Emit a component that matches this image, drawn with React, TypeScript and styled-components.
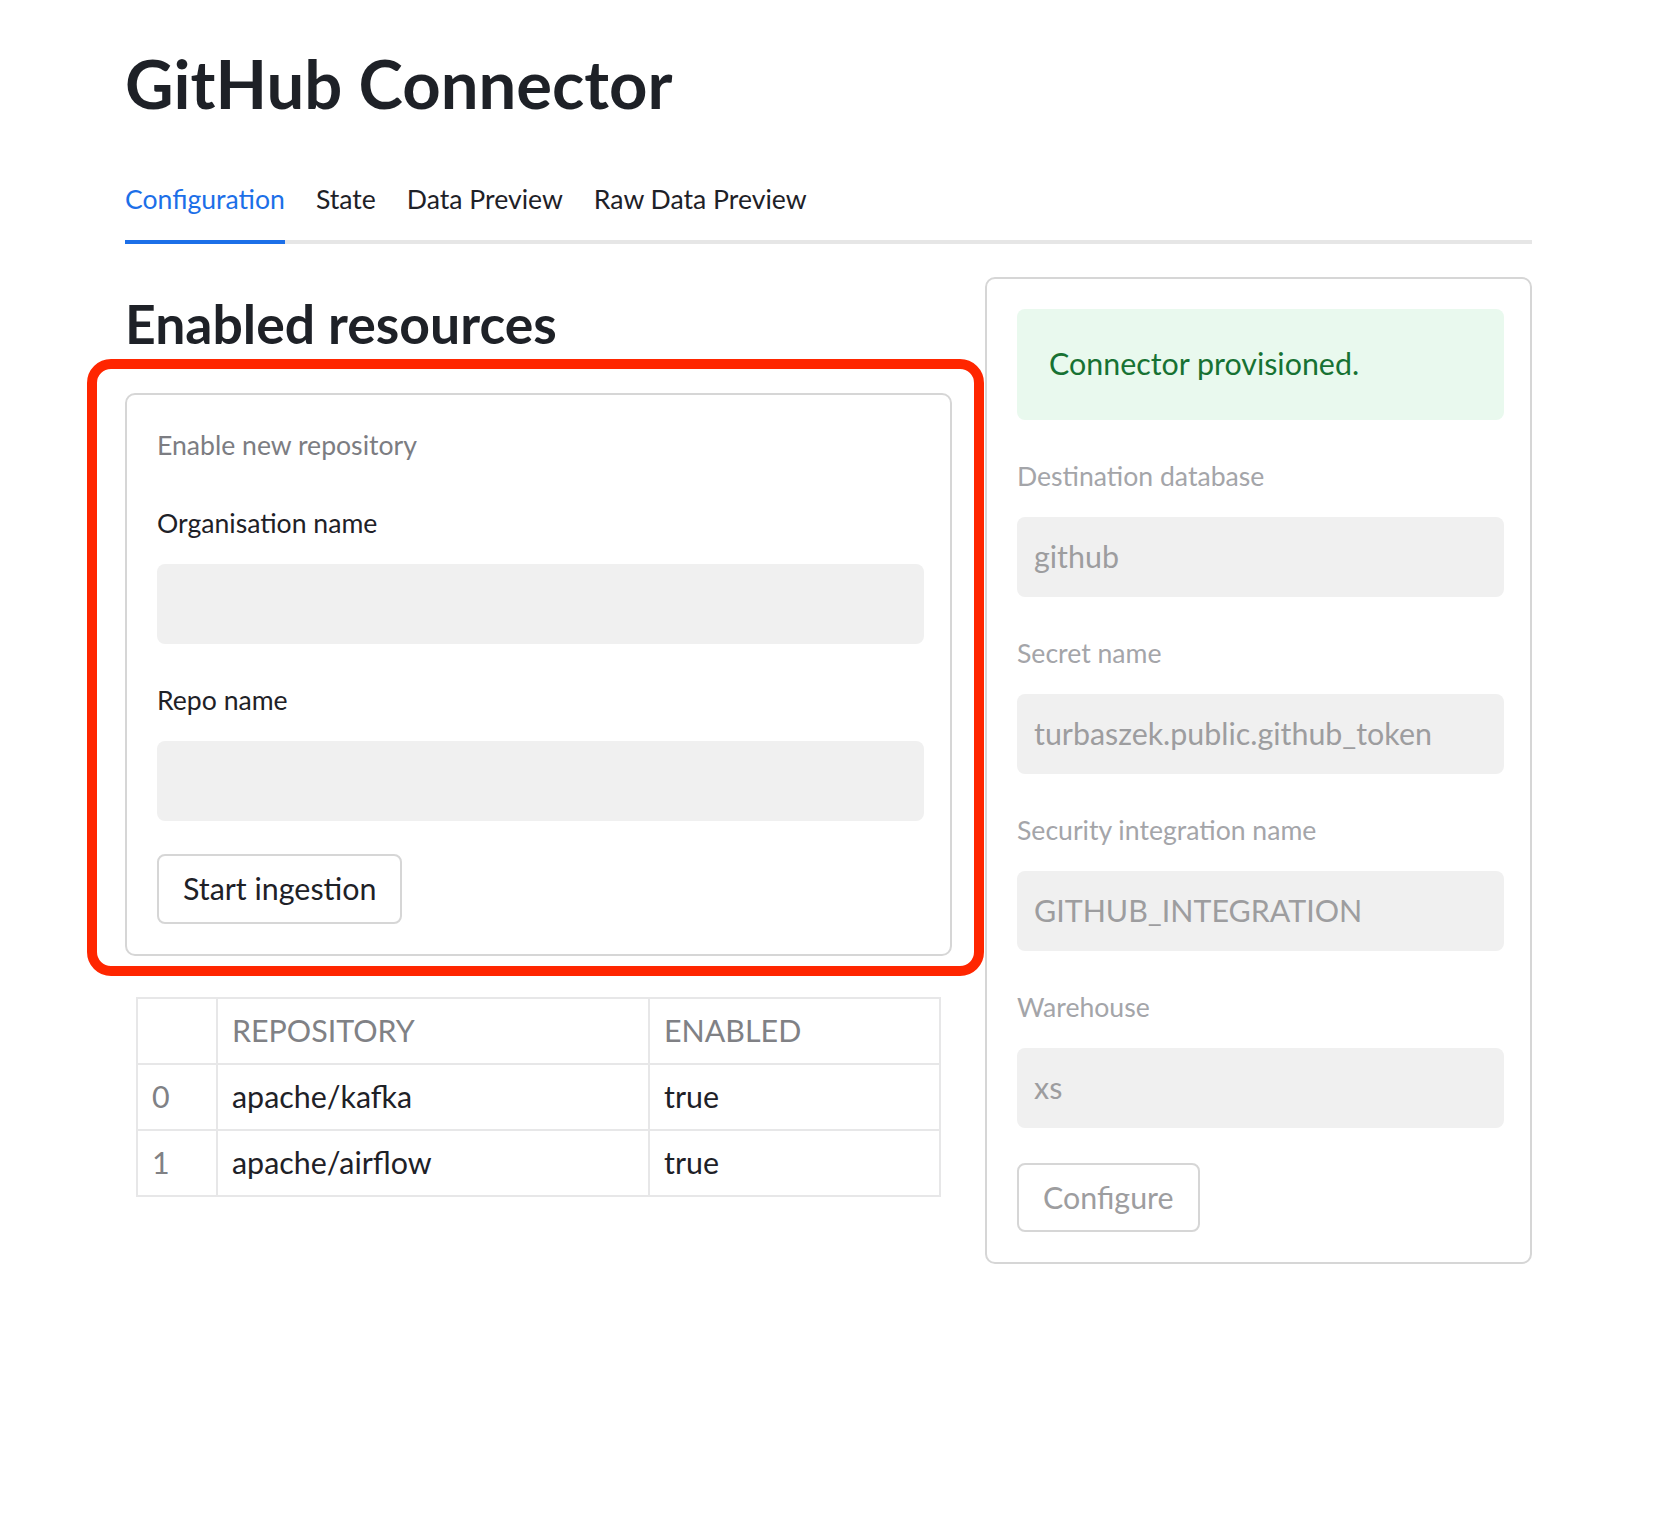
import React from "react";
import styled, { createGlobalStyle } from "styled-components";

const GlobalStyle = createGlobalStyle`
  html, body { margin: 0; padding: 0; background: #ffffff; }
  body {
    font-family: Lato, "Noto Sans", sans-serif;
    color: #262730;
    -webkit-font-smoothing: antialiased;
  }
  * { box-sizing: border-box; }
`;

const Page = styled.main`
  width: 1532px;
  padding: 40px 0 60px 125px;
`;

const Title = styled.h1`
  margin: 0;
  font-size: 67px;
  line-height: 86px;
  font-weight: 700;
  color: #1e2127;
`;

const TabList = styled.nav`
  display: flex;
  gap: 31px;
  margin-top: 56px;
  border-bottom: 4px solid #e6e6e6;
`;

const Tab = styled.div<{ $active?: boolean }>`
  font-size: 26.6px;
  line-height: 34px;
  padding-bottom: 24px;
  margin-bottom: -4px;
  border-bottom: 4px solid ${(p) => (p.$active ? "#1c6fe8" : "transparent")};
  color: ${(p) => (p.$active ? "#1c6fe8" : "#1e2127")};
`;

const Body = styled.div`
  display: flex;
  align-items: flex-start;
  gap: 33px;
  margin-top: 33px;
`;

const LeftCol = styled.section`
  width: 827px;
  display: flex;
  flex-direction: column;
`;

const SectionTitle = styled.h2`
  margin: 13px 0 0;
  font-size: 53.5px;
  line-height: 67px;
  font-weight: 700;
  color: #1e2127;
`;

const Form = styled.form`
  position: relative;
  margin-top: 36px;
  border: 2px solid #d6d6d6;
  border-radius: 10px;
  padding: 29px 26px 30px 30px;
  display: flex;
  flex-direction: column;

  &::before {
    content: "";
    position: absolute;
    top: -36px;
    left: -40px;
    right: -34px;
    bottom: -22px;
    border: 10px solid #ff2600;
    border-radius: 24px;
    pointer-events: none;
  }
`;

const Caption = styled.div`
  font-size: 26.6px;
  line-height: 43px;
  color: #7c7d82;
`;

const Field = styled.div`
  margin-top: 35px;
  display: flex;
  flex-direction: column;
`;

const Label = styled.label<{ $disabled?: boolean }>`
  font-size: 26.6px;
  line-height: 43px;
  margin-bottom: 19px;
  color: ${(p) => (p.$disabled ? "#a4a5a9" : "#1e2127")};
`;

const Input = styled.input`
  height: 80px;
  width: 100%;
  border: none;
  outline: none;
  border-radius: 8px;
  background: #f0f0f0;
  padding: 0 17px 2px;
  font-family: inherit;
  font-size: 30.4px;
  color: #9d9d9f;
  &:disabled { color: #9d9d9f; -webkit-text-fill-color: #9d9d9f; opacity: 1; }
`;

const Button = styled.button<{ $disabled?: boolean; $gap: number; $h: number }>`
  align-self: flex-start;
  margin-top: ${(p) => p.$gap}px;
  height: ${(p) => p.$h}px;
  padding: 0 24px 2px;
  border: 2px solid #d6d6d6;
  border-radius: 8px;
  background: #ffffff;
  font-family: inherit;
  font-size: 30.4px;
  color: ${(p) => (p.$disabled ? "#9d9d9f" : "#1e2127")};
`;

const Table = styled.table`
  margin: 41px 0 0 11px;
  width: 805px;
  border-collapse: collapse;
  table-layout: fixed;
`;

const Cell = styled.td<{ $muted?: boolean; $w?: number }>`
  ${(p) => (p.$w ? `width: ${p.$w}px;` : "")}
  height: 66px;
  border: 2px solid #e7e7e8;
  padding: 0 14px 2px;
  font-size: 30.4px;
  font-weight: 400;
  text-align: left;
  vertical-align: middle;
  color: ${(p) => (p.$muted ? "#808185" : "#1e2127")};
`;

const HeadCell = styled(Cell).attrs({ as: "th" })``;

const Panel = styled.aside`
  width: 547px;
  border: 2px solid #d6d6d6;
  border-radius: 10px;
  padding: 30px 26px 30px 30px;
  display: flex;
  flex-direction: column;
`;

const Success = styled.div`
  height: 111px;
  padding: 0 32px 3px;
  display: flex;
  align-items: center;
  border-radius: 8px;
  background: #e9f9ee;
  color: #177233;
  font-size: 30.4px;
`;

type Row = { idx: number; repo: string; enabled: string };

const rows: Row[] = [
  { idx: 0, repo: "apache/kafka", enabled: "true" },
  { idx: 1, repo: "apache/airflow", enabled: "true" },
];

const settings = [
  { label: "Destination database", value: "github" },
  { label: "Secret name", value: "turbaszek.public.github_token" },
  { label: "Security integration name", value: "GITHUB_INTEGRATION" },
  { label: "Warehouse", value: "xs" },
];

export default function App() {
  return (
    <>
      <GlobalStyle />
      <Page>
        <Title>GitHub Connector</Title>
        <TabList>
          <Tab $active>Configuration</Tab>
          <Tab>State</Tab>
          <Tab>Data Preview</Tab>
          <Tab>Raw Data Preview</Tab>
        </TabList>
        <Body>
          <LeftCol>
            <SectionTitle>Enabled resources</SectionTitle>
            <Form onSubmit={(e) => e.preventDefault()}>
              <Caption>Enable new repository</Caption>
              <Field>
                <Label>Organisation name</Label>
                <Input />
              </Field>
              <Field>
                <Label>Repo name</Label>
                <Input />
              </Field>
              <Button type="button" $gap={33} $h={70}>
                Start ingestion
              </Button>
            </Form>
            <Table>
              <thead>
                <tr>
                  <HeadCell $w={80}></HeadCell>
                  <HeadCell $w={432} $muted>
                    REPOSITORY
                  </HeadCell>
                  <HeadCell $muted>ENABLED</HeadCell>
                </tr>
              </thead>
              <tbody>
                {rows.map((r) => (
                  <tr key={r.idx}>
                    <Cell $muted>{r.idx}</Cell>
                    <Cell>{r.repo}</Cell>
                    <Cell>{r.enabled}</Cell>
                  </tr>
                ))}
              </tbody>
            </Table>
          </LeftCol>
          <Panel>
            <Success>Connector provisioned.</Success>
            {settings.map((s) => (
              <Field key={s.label}>
                <Label $disabled>{s.label}</Label>
                <Input disabled value={s.value} readOnly />
              </Field>
            ))}
            <Button type="button" $disabled $gap={35} $h={69}>
              Configure
            </Button>
          </Panel>
        </Body>
      </Page>
    </>
  );
}
